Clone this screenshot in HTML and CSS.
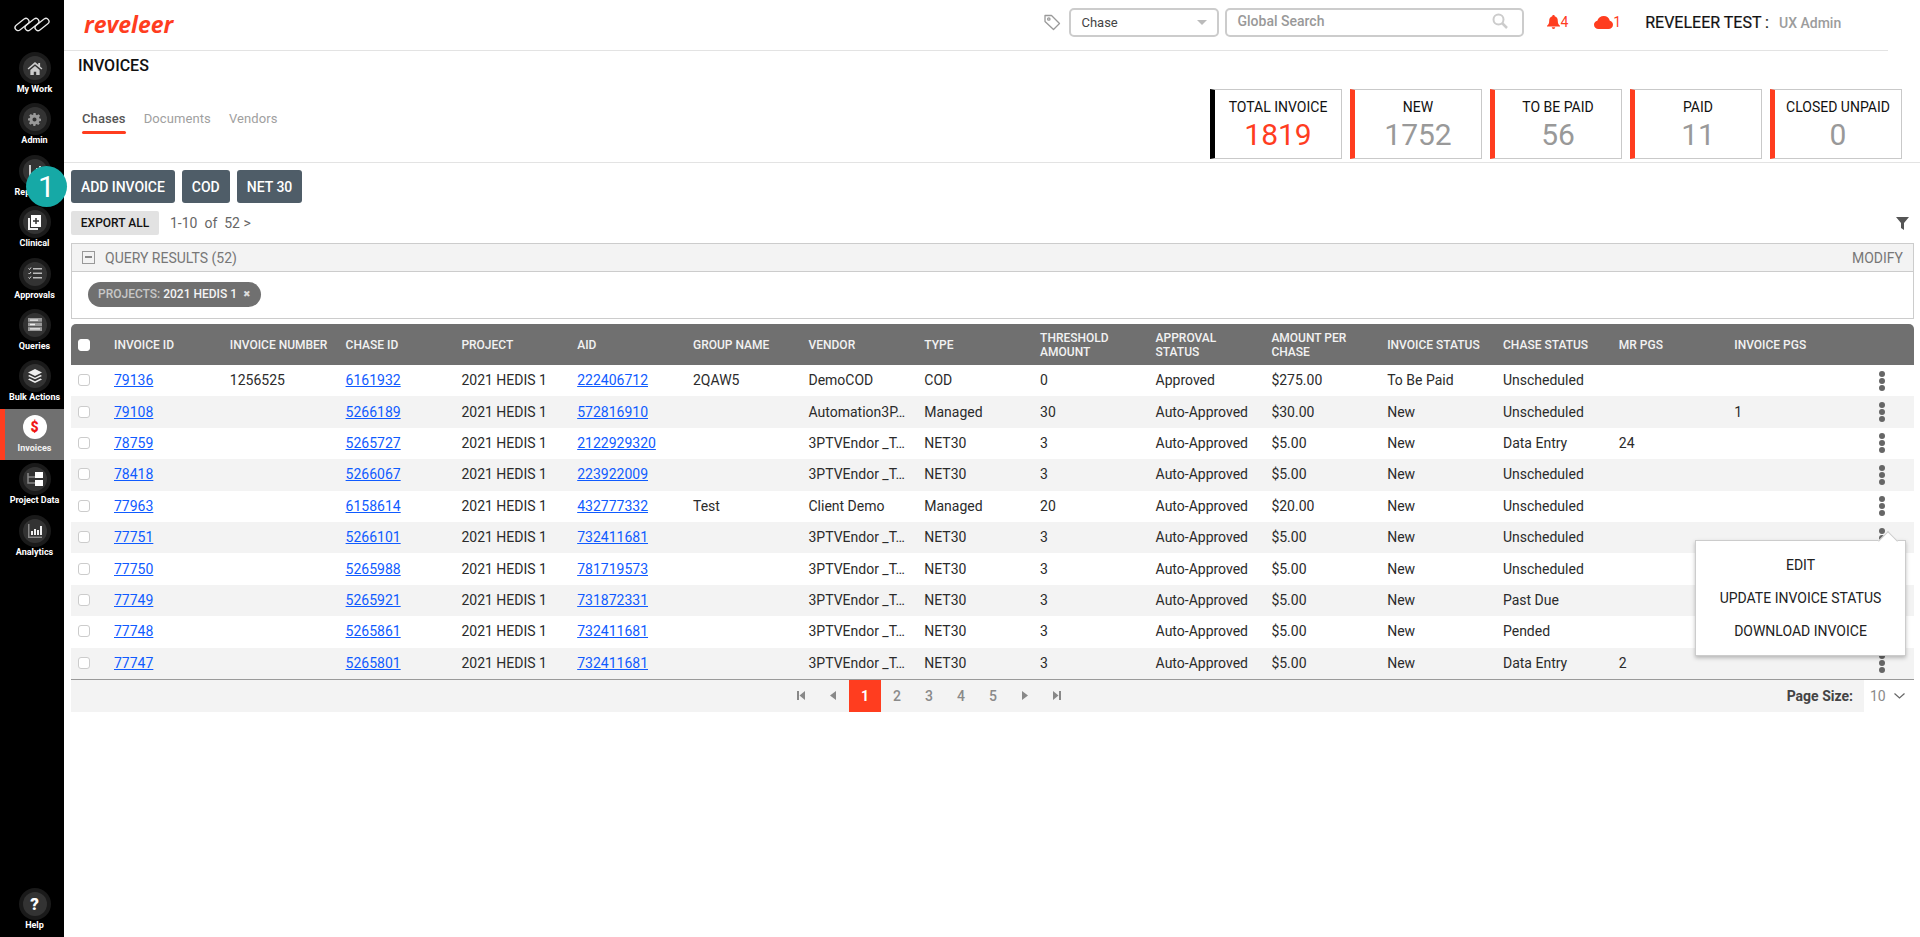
FILE: index.html
```html
<!DOCTYPE html>
<html lang="en">
<head>
<meta charset="utf-8">
<title>Invoices</title>
<link rel="stylesheet" href="styles.css">
</head>
<body>
<div class="app">
  <aside class="rail">
    <div class="rail-logo">
      <svg width="36" height="17" viewBox="0 0 36 17" fill="none" stroke="#e8e8e8" stroke-width="1.300"><rect x="0" y="5.500" width="16" height="6" rx="3" transform="rotate(-38 8 8.500)"/><rect x="10" y="5.500" width="16" height="6" rx="3" transform="rotate(-38 18 8.500)"/><rect x="20" y="5.500" width="16" height="6" rx="3" transform="rotate(-38 28 8.500)"/></svg>
    </div>
    <nav class="rail-nav">
      <a class="rail-item"><span class="ring"><span class="disc"><svg width="16" height="13" viewBox="0 0 16 14" fill="#ccc"><path d="M8 0 0 7l1 1.200L8 2.300l7 5.900L16 7l-2.500-2.200V1h-2v2zM3 8.500V14h3.700v-3.500h2.600V14H13V8.500L8 4.200z"/></svg></span></span><span class="rail-label">My Work</span></a>
      <a class="rail-item"><span class="ring"><span class="disc"><svg width="13" height="13" viewBox="0 0 14 14"><path fill="#999" fill-rule="evenodd" d="M5.800 0h2.400l.3 1.900 1.200.5L11.300 1.300 13 3l-1.100 1.600.5 1.200 1.600.3v2.400l-1.900.3-.5 1.200L12.700 11.300 11 13 9.400 11.900l-1.200.5-.3 1.600H5.800l-.3-1.900-1.200-.5L2.700 12.700 1 11l1.100-1.600-.5-1.200L0 8V5.800l1.900-.3.500-1.200L1.300 2.700 3 1l1.600 1.100 1.200-.5zM7 4.800a2.200 2.200 0 1 0 0 4.400 2.200 2.200 0 0 0 0-4.400z"/></svg></span></span><span class="rail-label">Admin</span></a>
      <a class="rail-item"><span class="ring"><span class="disc"><svg width="14" height="14" viewBox="0 0 14 14" fill="#ccc"><path d="M1 1h2v11h11v2H1zM5 7h2v4H5zM8 4h2v7H8zM11 2h2v9h-2z"/></svg></span></span><span class="rail-label">Reporting</span></a>
      <a class="rail-item"><span class="ring"><span class="disc"><svg width="15" height="15" viewBox="0 0 15 15"><path fill="#eee" d="M1 3h2v10h8v2H1z"/><path fill="#fff" d="M4 0h10v12H4z"/><path stroke="#333" stroke-width="1.500" d="M9 3v6M6 6h6"/></svg></span></span><span class="rail-label">Clinical</span></a>
      <a class="rail-item"><span class="ring"><span class="disc"><svg width="14" height="13" viewBox="0 0 14 13" fill="none" stroke="#ddd"><path d="M.5 1.500l1 1L3 .5M.5 6l1 1L3 5M.5 10.500l1 1L3 9.500"/><path stroke-width="1.500" stroke="#bbb" d="M5 1.800h9M5 6.300h9M5 10.800h9"/></svg></span></span><span class="rail-label">Approvals</span></a>
      <a class="rail-item"><span class="ring"><span class="disc"><svg width="14" height="13" viewBox="0 0 14 13"><path fill="#999" d="M0 0h14v13H0z"/><path stroke="#444" stroke-width="1" d="M0 4.200h14M0 8.700h14"/><path stroke="#eee" stroke-width="1.300" d="M2 2.200h8M2 6.500h5M2 10.800h10"/></svg></span></span><span class="rail-label">Queries</span></a>
      <a class="rail-item"><span class="ring"><span class="disc"><svg width="14" height="14" viewBox="0 0 14 14" fill="#eee"><path d="M7 0l7 3.500L7 7 0 3.500z"/><path d="M1.500 6L7 8.700 12.500 6 14 7 7 10.300 0 7z"/><path d="M1.500 9.500L7 12.200l5.500-2.700L14 10.500 7 14l-7-3.500z"/></svg></span></span><span class="rail-label">Bulk Actions</span></a>
      <a class="rail-item is-active"><span class="dollar">$</span><span class="rail-label">Invoices</span></a>
      <a class="rail-item"><span class="ring"><span class="disc"><svg width="16" height="14" viewBox="0 0 16 14"><path fill="none" stroke="#888" stroke-width="1.500" d="M1 1v10h7M1 5h7"/><path fill="#fff" d="M8 0h8v6H8zM8 8h8v6H8z"/></svg></span></span><span class="rail-label">Project Data</span></a>
      <a class="rail-item"><span class="ring"><span class="disc"><svg width="14" height="14" viewBox="0 0 14 14"><path fill="#888" d="M0 0h1.500v12.500H14V14H0z"/><path fill="#eee" d="M3 7h2v4H3zM6 5h2v6H6zM9 6h2v5H9zM12 2h2v9h-2z"/></svg></span></span><span class="rail-label">Analytics</span></a>
    </nav>
    <a class="rail-item rail-help"><span class="ring"><span class="disc help-mark">?</span></span><span class="rail-label">Help</span></a>
  </aside>

  <main class="main">
    <header class="topbar">
      <div class="brand">reveleer</div>
      <div class="topbar-tools">
        <svg class="tag-icon" width="17" height="17" viewBox="0 0 17 17" fill="none" stroke="#999" stroke-width="1.300"><path d="M1 1.500h6.500l8 8-6 6-8.500-8z" stroke-linejoin="round"/><circle cx="4.800" cy="5" r="1.200"/></svg>
        <div class="select-box"><span>Chase</span><span class="caret"></span></div>
        <div class="search-box"><span>Global Search</span><svg width="16" height="16" viewBox="0 0 16 16" fill="none" stroke="#ccc" stroke-width="2"><circle cx="6.500" cy="6.500" r="5"/><path d="M10 10l5 5" stroke-width="2.500"/></svg></div>
        <div class="alert alert-bell"><svg width="13" height="14" viewBox="0 0 13 14" fill="#ff3d1f"><path d="M6.500 0C7.300 0 7.700.5 7.700 1.200 10 1.800 10.800 3.600 10.800 6c0 2.500.9 3.800 2.200 4.800v.8H0v-.8C1.300 9.800 2.200 8.500 2.200 6c0-2.400.8-4.200 3.100-4.800C5.300.5 5.700 0 6.500 0zM4.800 12.300h3.400c0 1-.7 1.700-1.700 1.700s-1.700-.7-1.700-1.700z"/></svg><span>4</span></div>
        <div class="alert alert-cloud"><svg width="19" height="13" viewBox="0 0 19 13" fill="#ff3d1f"><path d="M4.500 13C2 13 0 11.200 0 8.800c0-2 1.400-3.600 3.300-4C4.200 2 6.800 0 9.800 0c3 0 5.400 2 6 4.800 1.900.5 3.200 2 3.200 4 0 2.400-2 4.200-4.500 4.200z"/></svg><span>1</span></div>
        <div class="user"><span class="user-name">REVELEER TEST :</span><span class="user-role">UX Admin</span></div>
      </div>
    </header>

    <section class="page-head">
      <div class="page-head-left">
        <h1 class="page-title">INVOICES</h1>
        <div class="tabs">
          <a class="tab is-active">Chases</a>
          <a class="tab">Documents</a>
          <a class="tab">Vendors</a>
        </div>
      </div>
      <div class="kpis">
        <div class="kpi kpi-total"><div class="kpi-label">TOTAL INVOICE</div><div class="kpi-value">1819</div></div>
        <div class="kpi"><div class="kpi-label">NEW</div><div class="kpi-value">1752</div></div>
        <div class="kpi"><div class="kpi-label">TO BE PAID</div><div class="kpi-value">56</div></div>
        <div class="kpi"><div class="kpi-label">PAID</div><div class="kpi-value">11</div></div>
        <div class="kpi"><div class="kpi-label">CLOSED UNPAID</div><div class="kpi-value">0</div></div>
      </div>
    </section>

    <section class="content">
      <div class="actions">
        <span class="step-badge">1</span>
        <button class="btn">ADD INVOICE</button>
        <button class="btn">COD</button>
        <button class="btn">NET 30</button>
      </div>
      <div class="export-row">
        <button class="btn-export">EXPORT ALL</button>
        <span class="count">1-10&nbsp; of&nbsp; 52 &gt;</span>
        <svg class="filter-icon" width="13" height="13" viewBox="0 0 13 13" fill="#555"><path d="M0 0h13L8 6v7L5 11V6z"/></svg>
      </div>
      <div class="query">
        <div class="query-head">
          <span class="collapse"></span>
          <span class="query-title">QUERY RESULTS (52)</span>
          <span class="modify">MODIFY</span>
        </div>
        <div class="query-body">
          <span class="chip"><span class="chip-key">PROJECTS:</span> 2021 HEDIS 1 <span class="chip-x">&#10006;</span></span>
        </div>
      </div>

      <div class="grid">
        <div class="row row-head">
          <div class="cell"><span class="check check-head"></span></div>
          <div class="cell">INVOICE ID</div><div class="cell">INVOICE NUMBER</div><div class="cell">CHASE ID</div><div class="cell">PROJECT</div><div class="cell">AID</div><div class="cell">GROUP NAME</div><div class="cell">VENDOR</div><div class="cell">TYPE</div><div class="cell">THRESHOLD AMOUNT</div><div class="cell">APPROVAL STATUS</div><div class="cell">AMOUNT PER CHASE</div><div class="cell">INVOICE STATUS</div><div class="cell">CHASE STATUS</div><div class="cell">MR PGS</div><div class="cell">INVOICE PGS</div><div class="cell"></div>
        </div>
        <div class="row">
          <div class="cell"><span class="check"></span></div><div class="cell"><a class="lnk">79136</a></div><div class="cell">1256525</div><div class="cell"><a class="lnk">6161932</a></div><div class="cell">2021 HEDIS 1</div><div class="cell"><a class="lnk">222406712</a></div><div class="cell">2QAW5</div><div class="cell">DemoCOD</div><div class="cell">COD</div><div class="cell">0</div><div class="cell">Approved</div><div class="cell">$275.00</div><div class="cell">To Be Paid</div><div class="cell">Unscheduled</div><div class="cell"></div><div class="cell"></div><div class="cell cell-menu"><span class="kebab"><i></i><i></i><i></i></span></div>
        </div>
        <div class="row">
          <div class="cell"><span class="check"></span></div><div class="cell"><a class="lnk">79108</a></div><div class="cell"></div><div class="cell"><a class="lnk">5266189</a></div><div class="cell">2021 HEDIS 1</div><div class="cell"><a class="lnk">572816910</a></div><div class="cell"></div><div class="cell">Automation3P&#8230;</div><div class="cell">Managed</div><div class="cell">30</div><div class="cell">Auto-Approved</div><div class="cell">$30.00</div><div class="cell">New</div><div class="cell">Unscheduled</div><div class="cell"></div><div class="cell">1</div><div class="cell cell-menu"><span class="kebab"><i></i><i></i><i></i></span></div>
        </div>
        <div class="row">
          <div class="cell"><span class="check"></span></div><div class="cell"><a class="lnk">78759</a></div><div class="cell"></div><div class="cell"><a class="lnk">5265727</a></div><div class="cell">2021 HEDIS 1</div><div class="cell"><a class="lnk">2122929320</a></div><div class="cell"></div><div class="cell">3PTVEndor _T&#8230;</div><div class="cell">NET30</div><div class="cell">3</div><div class="cell">Auto-Approved</div><div class="cell">$5.00</div><div class="cell">New</div><div class="cell">Data Entry</div><div class="cell">24</div><div class="cell"></div><div class="cell cell-menu"><span class="kebab"><i></i><i></i><i></i></span></div>
        </div>
        <div class="row">
          <div class="cell"><span class="check"></span></div><div class="cell"><a class="lnk">78418</a></div><div class="cell"></div><div class="cell"><a class="lnk">5266067</a></div><div class="cell">2021 HEDIS 1</div><div class="cell"><a class="lnk">223922009</a></div><div class="cell"></div><div class="cell">3PTVEndor _T&#8230;</div><div class="cell">NET30</div><div class="cell">3</div><div class="cell">Auto-Approved</div><div class="cell">$5.00</div><div class="cell">New</div><div class="cell">Unscheduled</div><div class="cell"></div><div class="cell"></div><div class="cell cell-menu"><span class="kebab"><i></i><i></i><i></i></span></div>
        </div>
        <div class="row">
          <div class="cell"><span class="check"></span></div><div class="cell"><a class="lnk">77963</a></div><div class="cell"></div><div class="cell"><a class="lnk">6158614</a></div><div class="cell">2021 HEDIS 1</div><div class="cell"><a class="lnk">432777332</a></div><div class="cell">Test</div><div class="cell">Client Demo</div><div class="cell">Managed</div><div class="cell">20</div><div class="cell">Auto-Approved</div><div class="cell">$20.00</div><div class="cell">New</div><div class="cell">Unscheduled</div><div class="cell"></div><div class="cell"></div><div class="cell cell-menu"><span class="kebab"><i></i><i></i><i></i></span></div>
        </div>
        <div class="row">
          <div class="cell"><span class="check"></span></div><div class="cell"><a class="lnk">77751</a></div><div class="cell"></div><div class="cell"><a class="lnk">5266101</a></div><div class="cell">2021 HEDIS 1</div><div class="cell"><a class="lnk">732411681</a></div><div class="cell"></div><div class="cell">3PTVEndor _T&#8230;</div><div class="cell">NET30</div><div class="cell">3</div><div class="cell">Auto-Approved</div><div class="cell">$5.00</div><div class="cell">New</div><div class="cell">Unscheduled</div><div class="cell"></div><div class="cell"></div><div class="cell cell-menu"><span class="kebab"><i></i><i></i><i></i></span></div>
        </div>
        <div class="row">
          <div class="cell"><span class="check"></span></div><div class="cell"><a class="lnk">77750</a></div><div class="cell"></div><div class="cell"><a class="lnk">5265988</a></div><div class="cell">2021 HEDIS 1</div><div class="cell"><a class="lnk">781719573</a></div><div class="cell"></div><div class="cell">3PTVEndor _T&#8230;</div><div class="cell">NET30</div><div class="cell">3</div><div class="cell">Auto-Approved</div><div class="cell">$5.00</div><div class="cell">New</div><div class="cell">Unscheduled</div><div class="cell"></div><div class="cell"></div><div class="cell cell-menu"></div>
        </div>
        <div class="row">
          <div class="cell"><span class="check"></span></div><div class="cell"><a class="lnk">77749</a></div><div class="cell"></div><div class="cell"><a class="lnk">5265921</a></div><div class="cell">2021 HEDIS 1</div><div class="cell"><a class="lnk">731872331</a></div><div class="cell"></div><div class="cell">3PTVEndor _T&#8230;</div><div class="cell">NET30</div><div class="cell">3</div><div class="cell">Auto-Approved</div><div class="cell">$5.00</div><div class="cell">New</div><div class="cell">Past Due</div><div class="cell"></div><div class="cell"></div><div class="cell cell-menu"></div>
        </div>
        <div class="row">
          <div class="cell"><span class="check"></span></div><div class="cell"><a class="lnk">77748</a></div><div class="cell"></div><div class="cell"><a class="lnk">5265861</a></div><div class="cell">2021 HEDIS 1</div><div class="cell"><a class="lnk">732411681</a></div><div class="cell"></div><div class="cell">3PTVEndor _T&#8230;</div><div class="cell">NET30</div><div class="cell">3</div><div class="cell">Auto-Approved</div><div class="cell">$5.00</div><div class="cell">New</div><div class="cell">Pended</div><div class="cell"></div><div class="cell"></div><div class="cell cell-menu"></div>
        </div>
        <div class="row">
          <div class="cell"><span class="check"></span></div><div class="cell"><a class="lnk">77747</a></div><div class="cell"></div><div class="cell"><a class="lnk">5265801</a></div><div class="cell">2021 HEDIS 1</div><div class="cell"><a class="lnk">732411681</a></div><div class="cell"></div><div class="cell">3PTVEndor _T&#8230;</div><div class="cell">NET30</div><div class="cell">3</div><div class="cell">Auto-Approved</div><div class="cell">$5.00</div><div class="cell">New</div><div class="cell">Data Entry</div><div class="cell">2</div><div class="cell"></div><div class="cell cell-menu"><span class="kebab"><i></i><i></i><i></i></span></div>
        </div>

        <div class="popover">
          <a class="pop-item">EDIT</a>
          <a class="pop-item">UPDATE INVOICE STATUS</a>
          <a class="pop-item">DOWNLOAD INVOICE</a>
        </div>
      </div>

      <div class="pager">
        <div class="pages">
          <span class="pg"><svg width="8" height="9" viewBox="0 0 8 9" fill="#888"><path d="M0 0h2v9H0zM8 0v9L2.500 4.500z"/></svg></span>
          <span class="pg"><svg width="6" height="9" viewBox="0 0 6 9" fill="#888"><path d="M6 0v9L0 4.500z"/></svg></span>
          <span class="pg pg-on">1</span>
          <span class="pg">2</span>
          <span class="pg">3</span>
          <span class="pg">4</span>
          <span class="pg">5</span>
          <span class="pg"><svg width="6" height="9" viewBox="0 0 6 9" fill="#888"><path d="M0 0v9l6-4.500z"/></svg></span>
          <span class="pg"><svg width="8" height="9" viewBox="0 0 8 9" fill="#888"><path d="M0 0v9l5.500-4.500zM6 0h2v9H6z"/></svg></span>
        </div>
        <div class="page-size">
          <span class="page-size-label">Page Size:</span>
          <span class="page-size-box"><span>10</span><svg width="11" height="6" viewBox="0 0 11 6" fill="none" stroke="#666" stroke-width="1.200"><path d="M.5.5l5 4.500 5-4.500"/></svg></span>
        </div>
      </div>
    </section>
  </main>
</div>
</body>
</html>
```

FILE: styles.css
```css
* { box-sizing: border-box; }
html, body { margin: 0; height: 100%; }
body {
  font-family: Roboto, "Liberation Sans", sans-serif;
  font-size: 14px;
  color: #2b2b2b;
  background: #fff;
  overflow: hidden;
}
.app { display: flex; height: 937px; }

/* Left rail */
.rail {
  width: 64px;
  flex: none;
  background: #000;
  display: flex;
  flex-direction: column;
}
.rail-logo {
  height: 49px;
  display: flex;
  align-items: center;
  justify-content: center;
  padding-bottom: 1px;
}
.rail-nav { display: flex; flex-direction: column; flex: 1; }
.rail-item {
  height: 51.4px;
  flex: none;
  display: flex;
  flex-direction: column;
  align-items: center;
  padding: 3px 0 0 5px;
  color: #fff;
}
.rail-help { height: 52px; }
.ring {
  width: 32px;
  height: 32px;
  flex: none;
  border-radius: 50%;
  background: #1a1a1a;
  display: flex;
  align-items: center;
  justify-content: center;
}
.disc {
  width: 24px;
  height: 24px;
  border-radius: 50%;
  background: #333;
  display: flex;
  align-items: center;
  justify-content: center;
}
.help-mark { color: #fff; font-size: 17px; font-weight: 900; }
.rail-label {
  font-size: 9px;
  font-weight: 700;
  line-height: 12px;
  margin-top: -1px;
  white-space: nowrap;
}
.rail-item.is-active {
  background: #707070;
  border-left: 5px solid #ff3d1f;
  padding: 6px 0 0;
}
.dollar {
  width: 24px;
  height: 24px;
  flex: none;
  border-radius: 50%;
  background: #fff;
  color: #f01616;
  font-size: 14px;
  font-weight: 900;
  line-height: 24px;
  text-align: center;
  margin-bottom: 3px;
}
.is-active .rail-label { color: #f2f2f2; margin-top: 0; }

/* Main */
.main { flex: 1; min-width: 0; display: flex; flex-direction: column; }
.topbar {
  height: 51px;
  flex: none;
  margin-right: 32px;
  border-bottom: 1px solid #e3e3e3;
  display: flex;
  align-items: flex-start;
  justify-content: space-between;
}
.brand {
  margin: 6px 0 0 20px;
  font-family: "Open Sans", Roboto, sans-serif;
  font-style: italic;
  font-weight: 700;
  font-size: 23px;
  line-height: 36px;
  color: #ff3d1f;
}
.topbar-tools { display: flex; align-items: center; height: 44px; }
.tag-icon { margin-right: 8px; }
.select-box, .search-box {
  height: 29px;
  border: 2px solid #ccc;
  border-radius: 5px;
  display: flex;
  align-items: center;
  justify-content: space-between;
  font-size: 13px;
}
.select-box { width: 150px; padding: 0 10px 0 10px; color: #444; margin-right: 6px; }
.caret {
  width: 0;
  height: 0;
  border-left: 5px solid transparent;
  border-right: 5px solid transparent;
  border-top: 5px solid #bbb;
}
.search-box { width: 299px; padding: 0 14px 3px 10px; color: #999; font-size: 14px; font-weight: 500; }
.alert { display: flex; align-items: center; color: #ff3d1f; font-size: 14px; }
.alert-bell { margin-left: 23px; }
.alert-cloud { margin-left: 26px; }
.user { display: flex; align-items: baseline; margin-left: 24px; }
.user-name { font-size: 16px; font-weight: 400; color: #111; white-space: nowrap; -webkit-text-stroke: .2px #111; }
.user-role { font-size: 14px; font-weight: 500; color: #9c9c9c; margin-left: 10px; width: 109px; }

.page-head {
  height: 112px;
  flex: none;
  border-bottom: 1px solid #e3e3e3;
  display: flex;
  justify-content: space-between;
  padding: 0 18px 0 14px;
}
.page-title {
  margin: 0;
  font-size: 16px;
  line-height: 20px;
  font-weight: 500;
  color: #111;
  padding-top: 5px;
  height: 25px;
}
.tabs { display: flex; gap: 18px; margin-top: 33px; padding-left: 4px; }
.tab { font-size: 13px; line-height: 20px; color: #a0a0a0; letter-spacing: .1px; padding-bottom: 3px; position: relative; }
.tab.is-active { color: #555; font-weight: 500; }
.tab.is-active::after {
  content: "";
  position: absolute;
  left: 0;
  right: 0;
  bottom: -2px;
  height: 3px;
  border-radius: 2px;
  background: #ff3d1f;
}
.kpis { display: flex; gap: 8px; padding-top: 38px; }
.kpi {
  width: 132px;
  height: 70px;
  border: 1px solid #c9c9c9;
  border-left: 5px solid #ff3d1f;
  text-align: center;
}
.kpi-total { border-left-color: #000; }
.kpi-label { font-size: 14px; line-height: 16px; color: #111; padding-top: 9px; }
.kpi-value { font-size: 30px; line-height: 36px; color: #999; margin-top: 2px; }
.kpi-total .kpi-value { color: #ff3d1f; }

.content { padding: 7px 6px 0 7px; position: relative; }
.actions { display: flex; gap: 7px; }
.step-badge {
  position: absolute;
  left: -38px;
  top: 3px;
  width: 41px;
  height: 41px;
  border-radius: 50%;
  background: #16a9a6;
  color: #fff;
  font-size: 30px;
  line-height: 41px;
  text-align: center;
}
.btn {
  height: 33px;
  border: 0;
  border-radius: 3px;
  background: #4f5d68;
  color: #fff;
  font: 500 14px Roboto, sans-serif;
  padding: 0 10px;
}
.btn:first-of-type { letter-spacing: -.07px; }
.export-row { display: flex; align-items: center; margin-top: 8px; height: 24px; }
.btn-export {
  width: 88px;
  height: 24px;
  border: 0;
  border-radius: 2px;
  background: #e2e2e2;
  color: #111;
  font: 500 12px Roboto, sans-serif;
  padding: 0;
}
.count { margin-left: 11px; color: #666; font-size: 14px; }
.filter-icon { margin-left: auto; margin-right: 5px; }

.query { margin-top: 8px; border: 1px solid #ccc; }
.query-head {
  height: 28px;
  background: #f3f3f3;
  border-bottom: 1px solid #ccc;
  display: flex;
  align-items: center;
  padding: 0 10px 0 10px;
  color: #777;
  font-size: 14px;
}
.collapse {
  width: 13px;
  height: 13px;
  border: 1px solid #999;
  position: relative;
  margin-right: 10px;
}
.collapse::after {
  content: "";
  position: absolute;
  left: 2px;
  right: 2px;
  top: 4px;
  height: 2px;
  background: #888;
}
.modify { margin-left: auto; font-size: 14px; }
.query-body { height: 46px; padding: 10px 0 0 16px; background: #fff; }
.chip {
  display: inline-block;
  width: 173px;
  height: 25px;
  border-radius: 13px;
  background: #707070;
  color: #f4f4f4;
  font-size: 12px;
  font-weight: 500;
  line-height: 24px;
  padding-left: 10px;
  white-space: nowrap;
}
.chip-key { color: #c7c7c7; }
.chip-x { font-size: 9px; margin-left: 3px; color: #ddd; vertical-align: 1px; }

.grid { margin-top: 5px; position: relative; }
.row {
  display: grid;
  grid-template-columns: 43px 115.8px 115.8px 115.8px 115.8px 115.8px 115.5px 115.8px 115.8px 115.5px 115.8px 115.8px 115.8px 115.8px 115.5px 115.8px 1fr;
  height: 31.4px;
  align-items: center;
  background: #fff;
}
.row:nth-child(odd) { background: #f3f3f3; }
.row-head {
  height: 41px;
  background: #707070 !important;
  color: #f2f2f2;
  font-size: 12px;
  font-weight: 500;
  line-height: 14px;
  border-radius: 5px 5px 0 0;
}
.cell { padding: 0 14px 1px 0; min-width: 0; white-space: nowrap; }
.row-head .cell { white-space: normal; padding-bottom: 0; }
.cell-menu { padding: 0 29px 0 0; display: flex; justify-content: flex-end; }
.check {
  display: block;
  width: 12px;
  height: 12px;
  margin-left: 7px;
  background: #fff;
  border: 1px solid #ccc;
  border-radius: 3px;
}
.check-head { border-color: #fff; }
.lnk { color: #0f5bff; text-decoration: underline; }
.kebab { display: flex; flex-direction: column; gap: 1px; }
.kebab i { display: block; width: 6px; height: 6px; border-radius: 50%; background: #666; }

.popover {
  position: absolute;
  left: 1624px;
  top: 216px;
  width: 211px;
  height: 116px;
  background: #fff;
  border: 1px solid #ccc;
  box-shadow: 0 2px 4px rgba(0,0,0,.25);
  display: flex;
  flex-direction: column;
  align-items: center;
  padding-top: 8px;
  color: #222;
}
.popover::before {
  content: "";
  position: absolute;
  left: 185px;
  top: -7px;
  width: 13px;
  height: 13px;
  background: #fff;
  border-left: 1px solid #ccc;
  border-top: 1px solid #ccc;
  transform: rotate(45deg);
}
.pop-item { height: 33px; line-height: 33px; font-size: 14px; position: relative; }

.pager {
  height: 33px;
  border-top: 1px solid #999;
  background: #f3f3f3;
  display: flex;
  justify-content: space-between;
}
.pages { display: flex; margin-left: 714px; }
.pg {
  width: 32px;
  height: 32px;
  display: flex;
  align-items: center;
  justify-content: center;
  color: #8a8a8a;
  font-size: 14px;
  font-weight: 500;
}
.pg-on { background: #ff3d1f; color: #fff; font-weight: 700; }
.page-size { display: flex; align-items: center; }
.page-size-label { font-weight: 700; font-size: 14px; color: #444; margin-right: 11px; }
.page-size-box {
  width: 50px;
  height: 32px;
  background: #fff;
  display: flex;
  align-items: center;
  gap: 8px;
  padding-left: 6px;
  color: #8a8a8a;
  font-size: 14px;
}
```
